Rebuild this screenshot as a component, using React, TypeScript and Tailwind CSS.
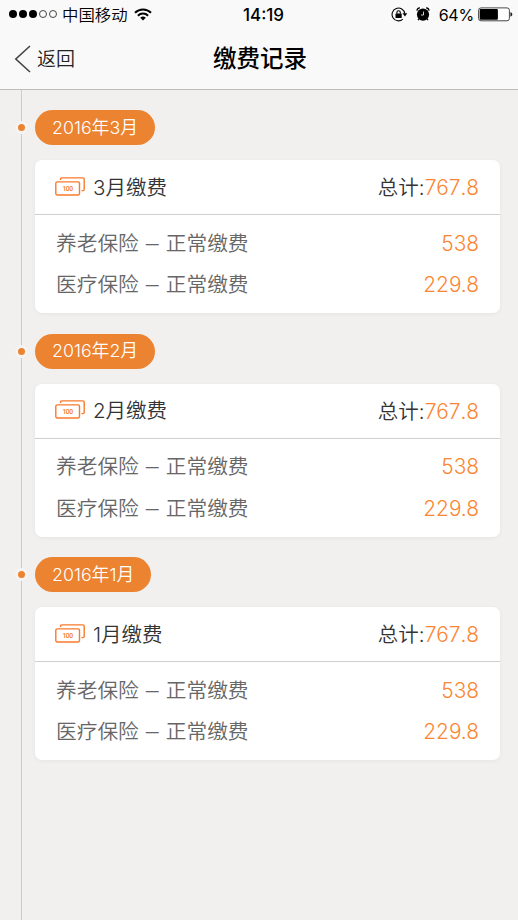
import React from 'react';

interface PaymentItem {
  name: string;
  status: string;
  amount: string;
}

interface PaymentRecord {
  year: number;
  month: number;
  total: string;
  items: PaymentItem[];
}

const items: PaymentItem[] = [
  { name: '养老保险', status: '正常缴费', amount: '538' },
  { name: '医疗保险', status: '正常缴费', amount: '229.8' },
];

const records: PaymentRecord[] = [
  { year: 2016, month: 3, total: '767.8', items },
  { year: 2016, month: 2, total: '767.8', items },
  { year: 2016, month: 1, total: '767.8', items },
];

const WifiIcon: React.FC = () => (
  <svg className="-mt-px ml-[6px] w-[18px] h-[13px]" viewBox="0 0 18 13" fill="none" stroke="#000" strokeWidth="2">
    <path d="M1 4.7a11.4 11.4 0 0 1 16 0" />
    <path d="M3.9 7.7a7.2 7.2 0 0 1 10.2 0" />
    <path d="M9 12.6 6.2 9.8a4 4 0 0 1 5.6 0z" fill="#000" stroke="none" />
  </svg>
);

const RotationLockIcon: React.FC = () => (
  <svg className="-mt-px w-[17px] h-[15px]" viewBox="0 0 17 15" fill="none" stroke="#000">
    <path d="M11.8 12.2A6.4 6.4 0 1 1 13.8 6.6" strokeWidth="1.1" />
    <path d="M11.4 6.3h4.8L14 9.4z" fill="#000" stroke="none" />
    <rect x="4.5" y="6.5" width="6.2" height="4.6" rx="0.5" fill="#000" stroke="none" />
    <path d="M5.9 6.8V5.4a1.7 1.7 0 0 1 3.4 0v1.4" strokeWidth="1.1" />
  </svg>
);

const AlarmIcon: React.FC = () => (
  <svg className="-mt-px ml-[8px] w-[14px] h-[14px]" viewBox="0 0 14 14" fill="none" stroke="#000">
    <circle cx="7" cy="7.6" r="6.1" fill="#000" stroke="none" />
    <path d="M0.8 3.6a3.6 3.6 0 0 1 3-2.8M13.2 3.6a3.6 3.6 0 0 0-3-2.8" strokeWidth="1.4" />
    <path d="M3 11.8 2 13.2M11 11.8l1 1.4" strokeWidth="1.3" />
    <path d="M7.5 4.600v3.400H5" stroke="#fff" strokeWidth="0.8" />
  </svg>
);

const BatteryIcon: React.FC = () => (
  <svg className="-mt-px ml-[4px] w-[35px] h-[15px]" viewBox="0 0 35 15">
    <rect x="0.6" y="0.9" width="30.8" height="12.9" rx="2.4" fill="#fff" stroke="#333" strokeWidth="0.9" />
    <rect x="1.7" y="2" width="18.2" height="10.7" rx="1" fill="#000" />
    <path d="M32.4 5.2c1.3.3 1.9 1.2 1.9 2.2s-.6 1.9-1.9 2.2z" fill="#222" />
  </svg>
);

const MoneyIcon: React.FC = () => (
  <svg className="-mt-[4px] w-[30px] h-[19px]" viewBox="0 0 30 19" fill="none" stroke="#fa7a2a" strokeWidth="1.4">
    <path d="M5.5 2.9V2.2Q5.5.9 6.8.9H27.9Q29.2.9 29.2 2.2V12.3Q29.2 13.6 27.9 13.6H26.5" />
    <rect x="0.8" y="4.9" width="23.7" height="13.1" rx="1.4" />
    <text x="8.7" y="14.2" transform="scale(0.85 1)" className="font-['Roboto'] text-[8px] font-medium" fill="#fa7a2a" stroke="none" textLength="12.5" lengthAdjust="spacing">100</text>
  </svg>
);

const StatusBar: React.FC = () => (
  <div className="grid grid-cols-3 items-center h-[29px] pl-[9px] pr-[5px] text-black">
    <div className="flex items-center">
      <div className="-mt-px flex gap-[2px]">
        {[0, 1, 2, 3, 4].map((i) => (
          <span key={i} className={i < 3 ? 'w-[8px] h-[8px] rounded-full bg-black' : 'w-[8px] h-[8px] rounded-full border border-[#444]'} />
        ))}
      </div>
      <span className="ml-[5px] text-[16.4px] leading-[20px] whitespace-nowrap">中国移动</span>
      <WifiIcon />
    </div>
    <span className="pl-[5px] text-center text-[17px] leading-[20px] font-[550]">14:19</span>
    <div className="flex items-center justify-end">
      <RotationLockIcon />
      <AlarmIcon />
      <span className="ml-[9px] text-[16px] leading-[20px] font-normal tracking-[-0.2px]">64%</span>
      <BatteryIcon />
    </div>
  </div>
);

const Header: React.FC = () => (
  <header className="h-[90px] bg-[#f9f9f9] border-b border-[#bdbcbc]">
    <StatusBar />
    <div className="grid grid-cols-[1fr_auto_1fr] items-center h-[60px] pl-[14px] pr-[12px]">
      <button className="flex items-center">
        <svg className="w-[17px] h-[28px]" viewBox="0 0 17 28" fill="none" stroke="#444" strokeWidth="1.6">
          <path d="M16 1 1.8 14 16 27" />
        </svg>
        <span className="ml-[6px] pt-[2px] text-[19px] leading-[28px] text-[#222]">返回</span>
      </button>
      <h1 className="text-[23.5px] leading-[32px] font-medium text-black">缴费记录</h1>
    </div>
  </header>
);

const RecordCard: React.FC<{ record: PaymentRecord }> = ({ record }) => (
  <div className="mt-[15px] rounded-[7px] bg-white shadow-[0_1px_4px_rgba(0,0,0,0.05)]">
    <div className="flex items-center h-[55px] pt-[2px] pl-[20px] pr-[21px] border-b border-[#cfcfcf] text-[20.5px] text-[#333]">
      <MoneyIcon />
      <span className="ml-[8px]">{record.month}月缴费</span>
      <span className="ml-auto">
        总计:<span className="text-[20.8px] text-[#fb8532] [font-kerning:none]">{record.total}</span>
      </span>
    </div>
    <ul className="pt-[7.5px] pb-[7.5px]">
      {record.items.map((item) => (
        <li key={item.name} className="flex items-center h-[41.5px] pl-[21px] pr-[21px] text-[20.7px] text-[#666]">
          <span>{item.name}</span>
          <span className="w-[27px] flex justify-center">
            <span className="scale-x-125">–</span>
          </span>
          <span>{item.status}</span>
          <span className="ml-auto text-[20.8px] text-[#fb8532]">{item.amount}</span>
        </li>
      ))}
    </ul>
  </div>
);

const App: React.FC = () => {
  return (
    <div className="flex flex-col w-full h-[920px] overflow-hidden bg-[#f1f0ee] font-['Inter','Noto_Sans_CJK_SC',sans-serif] font-[350]">
      <Header />
      <main className="relative flex-1 pt-[20px] pl-[35px] pr-[18px]">
        {/* Timeline */}
        <div className="absolute top-0 bottom-0 left-[21px] w-px bg-[#d2c9c7]"></div>

        {records.map((record) => (
          <section key={record.month} className="h-[223.5px]">
            <div className="relative w-fit h-[35px] pt-px px-[17px] rounded-full bg-[#ec8331] flex items-center text-[17.8px] text-white">
              <span className="absolute left-[-20px] top-[11px] w-[13px] h-[13px] rounded-full bg-[#f6f4f2] flex items-center justify-center">
                <span className="w-[7px] h-[7px] rounded-full bg-[#ec8331]"></span>
              </span>
              {record.year}年{record.month}月
            </div>
            <RecordCard record={record} />
          </section>
        ))}
      </main>
    </div>
  );
};

export default App;
